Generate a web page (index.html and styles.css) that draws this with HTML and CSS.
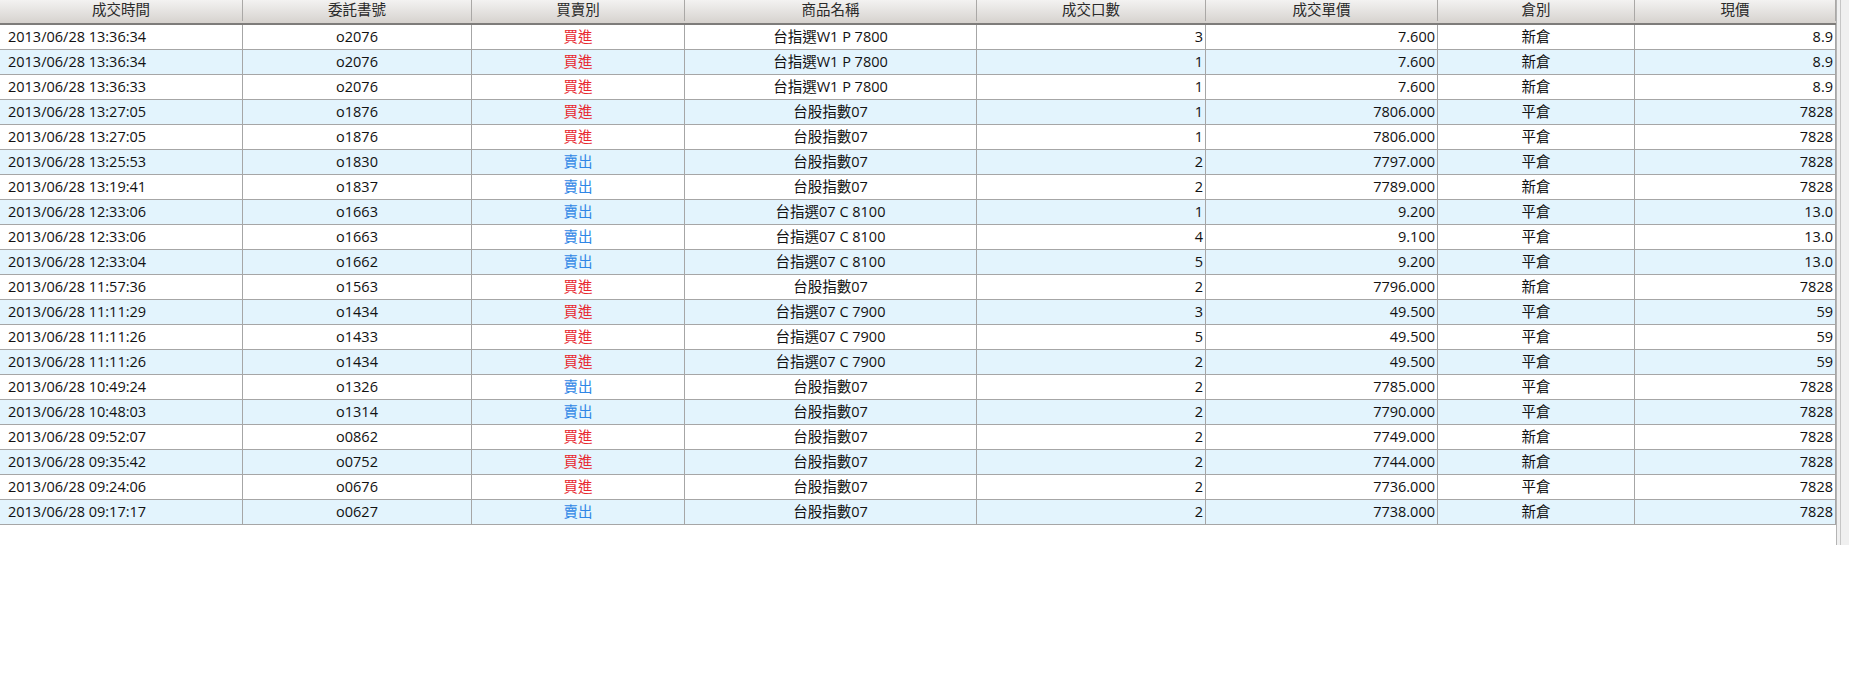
FILE: index.html
```html
<!DOCTYPE html>
<html lang="zh-Hant">
<head>
<meta charset="utf-8">
<title>成交回報</title>
<link rel="stylesheet" href="styles.css">
</head>
<body>
<div class="panel">
  <div class="grid">
    <div class="hrow">
      <div class="hc">成交時間</div>
      <div class="hc">委託書號</div>
      <div class="hc">買賣別</div>
      <div class="hc">商品名稱</div>
      <div class="hc">成交口數</div>
      <div class="hc">成交單價</div>
      <div class="hc">倉別</div>
      <div class="hc">現價</div>
    </div>
    <div class="row"><div class="c l">2013/06/28 13:36:34</div><div class="c">o2076</div><div class="c buy">買進</div><div class="c">台指選W1 P 7800</div><div class="c r">3</div><div class="c r">7.600</div><div class="c">新倉</div><div class="c r">8.9</div></div>
    <div class="row alt"><div class="c l">2013/06/28 13:36:34</div><div class="c">o2076</div><div class="c buy">買進</div><div class="c">台指選W1 P 7800</div><div class="c r">1</div><div class="c r">7.600</div><div class="c">新倉</div><div class="c r">8.9</div></div>
    <div class="row"><div class="c l">2013/06/28 13:36:33</div><div class="c">o2076</div><div class="c buy">買進</div><div class="c">台指選W1 P 7800</div><div class="c r">1</div><div class="c r">7.600</div><div class="c">新倉</div><div class="c r">8.9</div></div>
    <div class="row alt"><div class="c l">2013/06/28 13:27:05</div><div class="c">o1876</div><div class="c buy">買進</div><div class="c">台股指數07</div><div class="c r">1</div><div class="c r">7806.000</div><div class="c">平倉</div><div class="c r">7828</div></div>
    <div class="row"><div class="c l">2013/06/28 13:27:05</div><div class="c">o1876</div><div class="c buy">買進</div><div class="c">台股指數07</div><div class="c r">1</div><div class="c r">7806.000</div><div class="c">平倉</div><div class="c r">7828</div></div>
    <div class="row alt"><div class="c l">2013/06/28 13:25:53</div><div class="c">o1830</div><div class="c sell">賣出</div><div class="c">台股指數07</div><div class="c r">2</div><div class="c r">7797.000</div><div class="c">平倉</div><div class="c r">7828</div></div>
    <div class="row"><div class="c l">2013/06/28 13:19:41</div><div class="c">o1837</div><div class="c sell">賣出</div><div class="c">台股指數07</div><div class="c r">2</div><div class="c r">7789.000</div><div class="c">新倉</div><div class="c r">7828</div></div>
    <div class="row alt"><div class="c l">2013/06/28 12:33:06</div><div class="c">o1663</div><div class="c sell">賣出</div><div class="c">台指選07 C 8100</div><div class="c r">1</div><div class="c r">9.200</div><div class="c">平倉</div><div class="c r">13.0</div></div>
    <div class="row"><div class="c l">2013/06/28 12:33:06</div><div class="c">o1663</div><div class="c sell">賣出</div><div class="c">台指選07 C 8100</div><div class="c r">4</div><div class="c r">9.100</div><div class="c">平倉</div><div class="c r">13.0</div></div>
    <div class="row alt"><div class="c l">2013/06/28 12:33:04</div><div class="c">o1662</div><div class="c sell">賣出</div><div class="c">台指選07 C 8100</div><div class="c r">5</div><div class="c r">9.200</div><div class="c">平倉</div><div class="c r">13.0</div></div>
    <div class="row"><div class="c l">2013/06/28 11:57:36</div><div class="c">o1563</div><div class="c buy">買進</div><div class="c">台股指數07</div><div class="c r">2</div><div class="c r">7796.000</div><div class="c">新倉</div><div class="c r">7828</div></div>
    <div class="row alt"><div class="c l">2013/06/28 11:11:29</div><div class="c">o1434</div><div class="c buy">買進</div><div class="c">台指選07 C 7900</div><div class="c r">3</div><div class="c r">49.500</div><div class="c">平倉</div><div class="c r">59</div></div>
    <div class="row"><div class="c l">2013/06/28 11:11:26</div><div class="c">o1433</div><div class="c buy">買進</div><div class="c">台指選07 C 7900</div><div class="c r">5</div><div class="c r">49.500</div><div class="c">平倉</div><div class="c r">59</div></div>
    <div class="row alt"><div class="c l">2013/06/28 11:11:26</div><div class="c">o1434</div><div class="c buy">買進</div><div class="c">台指選07 C 7900</div><div class="c r">2</div><div class="c r">49.500</div><div class="c">平倉</div><div class="c r">59</div></div>
    <div class="row"><div class="c l">2013/06/28 10:49:24</div><div class="c">o1326</div><div class="c sell">賣出</div><div class="c">台股指數07</div><div class="c r">2</div><div class="c r">7785.000</div><div class="c">平倉</div><div class="c r">7828</div></div>
    <div class="row alt"><div class="c l">2013/06/28 10:48:03</div><div class="c">o1314</div><div class="c sell">賣出</div><div class="c">台股指數07</div><div class="c r">2</div><div class="c r">7790.000</div><div class="c">平倉</div><div class="c r">7828</div></div>
    <div class="row"><div class="c l">2013/06/28 09:52:07</div><div class="c">o0862</div><div class="c buy">買進</div><div class="c">台股指數07</div><div class="c r">2</div><div class="c r">7749.000</div><div class="c">新倉</div><div class="c r">7828</div></div>
    <div class="row alt"><div class="c l">2013/06/28 09:35:42</div><div class="c">o0752</div><div class="c buy">買進</div><div class="c">台股指數07</div><div class="c r">2</div><div class="c r">7744.000</div><div class="c">新倉</div><div class="c r">7828</div></div>
    <div class="row"><div class="c l">2013/06/28 09:24:06</div><div class="c">o0676</div><div class="c buy">買進</div><div class="c">台股指數07</div><div class="c r">2</div><div class="c r">7736.000</div><div class="c">平倉</div><div class="c r">7828</div></div>
    <div class="row alt"><div class="c l">2013/06/28 09:17:17</div><div class="c">o0627</div><div class="c sell">賣出</div><div class="c">台股指數07</div><div class="c r">2</div><div class="c r">7738.000</div><div class="c">新倉</div><div class="c r">7828</div></div>
  </div>
  <div class="strip"><div class="strip-line"></div></div>
</div>
</body>
</html>
```

FILE: styles.css
```css
html, body {
  margin: 0;
  padding: 0;
  background: #ffffff;
}

body {
  font-family: "Open Sans", "Noto Sans CJK TC", sans-serif;
  font-size: 14.5px;
  color: #111111;
}

.panel {
  display: flex;
  align-items: flex-start;
  width: 1849px;
}

.grid {
  width: 1836px;
  display: flex;
  flex-direction: column;
}

.hrow,
.row {
  display: grid;
  grid-template-columns: 243px 229px 213px 292px 229px 232px 197px 201px;
}

.hrow {
  height: 23px;
  border-bottom: 2px solid #7e7c7a;
  background: linear-gradient(#f3f2f1, #e6e4e2 45%, #d6d2ce);
  align-items: start;
}

.hc {
  height: 21px;
  line-height: 20px;
  text-align: center;
  color: #2a2a2a;
  border-right: 1px solid #aaa8a6;
}

.row {
  height: 24px;
  border-bottom: 1px solid #a6a6a6;
  background: #ffffff;
}

.row.alt {
  background: #e3f4fd;
}

.c {
  line-height: 24px;
  text-align: center;
  border-right: 1px solid #a6a6a6;
  white-space: nowrap;
  overflow: hidden;
}

.c.l {
  text-align: left;
  padding-left: 8px;
}

.c.r {
  text-align: right;
  padding-right: 2px;
}

.c.buy {
  color: #e8262e;
}

.c.sell {
  color: #2f86e6;
}

.strip {
  width: 12px;
  height: 545px;
  background: #f0f0f0;
  border-left: 1px solid #b4b4b4;
  display: flex;
}

.strip-line {
  margin-left: 3px;
  width: 1px;
  background: #c6c6c6;
}
```
